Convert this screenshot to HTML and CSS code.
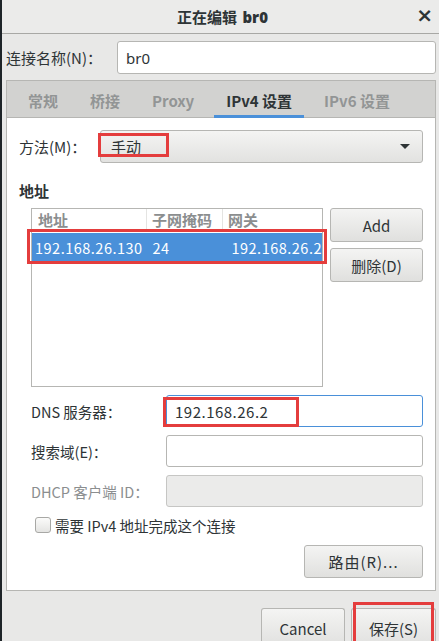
FILE: index.html
```html
<!DOCTYPE html>
<html lang="zh-CN">
<head>
<meta charset="utf-8">
<title>正在编辑 br0</title>
<link rel="stylesheet" href="styles.css">
</head>
<body>
<div class="window">
  <div class="titlebar">
    <span class="title">正在编辑 <b class="latin">br0</b></span>
    <span class="close">×</span>
  </div>
  <div class="content">
    <div class="name-row">
      <span class="label">连接名称(N)：</span>
      <div class="entry name-entry"><span class="latin">br0</span></div>
    </div>
    <div class="notebook">
      <div class="tabs">
        <span class="tab">常规</span>
        <span class="tab">桥接</span>
        <span class="tab">Proxy</span>
        <span class="tab active">IPv4 设置</span>
        <span class="tab">IPv6 设置</span>
      </div>
      <div class="page">
        <div class="method-row">
          <span class="label">方法(M)：</span>
          <div class="combo">
            <span class="combo-text">手动</span>
            <span class="arrow"></span>
            <span class="mark mark-method"></span>
          </div>
        </div>
        <div class="heading">地址</div>
        <div class="addr-block">
          <div class="tree">
            <div class="tree-head">
              <span class="col c1">地址</span>
              <span class="col c2">子网掩码</span>
              <span class="col c3">网关</span>
            </div>
            <div class="tree-row selected">
              <span class="col c1">192.168.26.130</span>
              <span class="col c2">24</span>
              <span class="col c3">192.168.26.2</span>
            </div>
            <span class="mark mark-row"></span>
          </div>
          <div class="side-buttons">
            <div class="button">Add</div>
            <div class="button">删除(D)</div>
          </div>
        </div>
        <div class="form">
          <span class="label">DNS 服务器：</span>
          <div class="entry focused"><span class="num">192.168.26.2</span><span class="mark mark-dns"></span></div>
          <span class="label">搜索域(E)：</span>
          <div class="entry"></div>
          <span class="label disabled">DHCP 客户端 ID：</span>
          <div class="entry insensitive"></div>
        </div>
        <div class="check-row">
          <span class="checkbox"></span>
          <span class="label">需要 IPv4 地址完成这个连接</span>
        </div>
        <div class="route-row">
          <div class="button route">路由(R)...</div>
        </div>
      </div>
    </div>
    <div class="actions">
      <div class="button action cancel">Cancel</div>
      <div class="button action save">保存(S)<span class="mark mark-save"></span></div>
    </div>
  </div>
</div>
</body>
</html>
```
FILE: styles.css
```css
html, body {
  margin: 0;
  padding: 0;
}
body {
  width: 439px;
  height: 641px;
  overflow: hidden;
  background: #1e2428;
  font-family: "Noto Sans CJK SC", "Noto Sans", sans-serif;
  font-size: 15px;
  color: #2e3436;
}
.window {
  margin-left: 2px;
  height: 641px;
  background: #e8e8e7;
  display: flex;
  flex-direction: column;
  overflow: hidden;
}
.window > * {
  flex-shrink: 0;
}
.titlebar {
  height: 33px;
  border-bottom: 1px solid #a8a8a5;
  background: #ebebea;
  position: relative;
  display: flex;
  align-items: center;
  justify-content: center;
}
.title {
  font-weight: bold;
  font-size: 15px;
  margin-left: 4px;
  color: #2e3436;
}
.title b {
  margin-left: 2px;
}
.close {
  position: absolute;
  right: 6px;
  top: 3px;
  font-size: 20px;
  font-weight: bold;
  font-family: "DejaVu Sans", sans-serif;
  color: #2e3436;
}
.content {
  padding: 0 3px 0 4px;
  display: flex;
  flex-direction: column;
}
.content > * {
  flex-shrink: 0;
}
.name-row {
  display: flex;
  align-items: center;
  margin-top: 7px;
  height: 33px;
}
.name-row .label {
  width: 111px;
}
.entry {
  height: 30px;
  box-sizing: border-box;
  background: #fff;
  border: 1px solid #b6b6b3;
  border-radius: 3px;
  display: flex;
  align-items: center;
  padding-left: 8px;
  position: relative;
}
.name-entry {
  flex: 1;
  height: 33px;
}
.notebook {
  margin-top: 6px;
  border: 1px solid #b6b6b3;
  background: #fff;
}
.tabs {
  height: 37px;
  box-sizing: border-box;
  background: #d2d2d0;
  border-bottom: 1px solid #b6b6b3;
  display: flex;
  padding-left: 5px;
}
.tab {
  margin: 0 4px;
  padding: 2px 12px 0;
  display: flex;
  align-items: center;
  font-weight: bold;
  color: #929595;
  box-sizing: border-box;
}
.tab.active {
  color: #2e3436;
  border-bottom: 3px solid #4a90d9;
  padding-top: 5px;
  margin-bottom: -1px;
}
.page {
  height: 472px;
  box-sizing: border-box;
  padding: 12px 12px 0 12px;
  display: flex;
  flex-direction: column;
}
.method-row {
  display: flex;
  align-items: center;
  height: 33px;
}
.method-row .label {
  width: 81px;
}
.combo {
  flex: 1;
  height: 33px;
  box-sizing: border-box;
  border: 1px solid #b6b6b3;
  border-radius: 3px;
  background: linear-gradient(#f4f4f3, #e2e2e0);
  display: flex;
  align-items: center;
  padding: 0 12px 0 10px;
  position: relative;
}
.combo-text {
  flex: 1;
}
.arrow {
  width: 0;
  height: 0;
  border-left: 5px solid transparent;
  border-right: 5px solid transparent;
  border-top: 5px solid #2e3436;
}
.mark {
  position: absolute;
  border: 3px solid #e43d3d;
  box-sizing: border-box;
  pointer-events: none;
}
.mark-method {
  left: -3px;
  top: 2px;
  width: 71px;
  height: 24px;
}
.heading {
  font-weight: bold;
  margin-top: 18px;
  height: 20px;
  line-height: 20px;
}
.addr-block {
  display: flex;
  margin-top: 7px;
  margin-left: 12px;
  gap: 7px;
}
.tree {
  width: 292px;
  height: 179px;
  box-sizing: border-box;
  border: 1px solid #b6b6b3;
  position: relative;
  background: #fff;
}
.tree-head {
  display: flex;
  height: 21px;
  align-items: center;
  color: #8b8e8f;
  font-weight: bold;
  border-bottom: 1px solid #e4e4e2;
}
.tree-head .col {
  border-left: 1px solid #e4e4e2;
  height: 21px;
  line-height: 21px;
  padding-left: 5px;
  box-sizing: border-box;
}
.tree-head .c1 {
  border-left: none;
  padding-left: 6px;
}
.col.c1 { width: 114px; }
.col.c2 { width: 76px; }
.col.c3 { flex: 1; }
.tree-row {
  display: flex;
  height: 28px;
  align-items: center;
  margin-top: 2px;
}
.tree-row.selected {
  background: #4a90d9;
  color: #fff;
}
.tree-row .col {
  padding-left: 3px;
  font-size: 14.5px;
  letter-spacing: 0.5px;
}
.tree-row .c2 { padding-left: 5px; }
.tree-row .c3 { padding-left: 4px; }
.mark-row {
  left: -5px;
  top: 20px;
  width: 300px;
  height: 35px;
}
.side-buttons {
  display: flex;
  flex-direction: column;
  gap: 6px;
  width: 93px;
}
.button {
  height: 34px;
  box-sizing: border-box;
  border: 1px solid #b6b6b3;
  border-radius: 3px;
  background: linear-gradient(#f4f4f3, #e0e0de);
  display: flex;
  align-items: center;
  justify-content: center;
  position: relative;
  color: #2e3436;
}
.form {
  display: grid;
  grid-template-columns: 135px 1fr;
  grid-auto-rows: 32px;
  row-gap: 8px;
  margin-top: 8px;
  margin-left: 12px;
  align-items: center;
}
.form .entry {
  height: 32px;
}
.form .label {
  font-size: 14.5px;
}
.label.disabled {
  color: #8b8e8f;
}
.entry.focused {
  border-color: #4a90d9;
}
.entry .num {
  letter-spacing: 0.5px;
}
.mark-dns {
  left: -4px;
  top: 1px;
  width: 136px;
  height: 30px;
}
.entry.insensitive {
  background: #ebebea;
  border-color: #c6c6c4;
}
.check-row {
  display: flex;
  align-items: center;
  margin-top: 10px;
  margin-left: 16px;
  height: 16px;
  gap: 4px;
}
.checkbox {
  width: 14px;
  height: 14px;
  border: 1px solid #a8a8a5;
  border-radius: 3px;
  background: linear-gradient(#fbfbfa, #e4e4e2);
}
.check-row .label {
  font-size: 14.5px;
}
.route-row {
  display: flex;
  justify-content: flex-end;
  margin-top: 12px;
}
.route {
  width: 119px;
  height: 33px;
  letter-spacing: 1px;
}
.actions {
  display: flex;
  justify-content: flex-end;
  gap: 6px;
  margin-top: 17px;
}
.action {
  height: 40px;
  border-bottom: none;
  border-radius: 3px 3px 0 0;
}
.cancel {
  width: 84px;
}
.save {
  width: 85px;
}
.mark-save {
  left: 1px;
  top: -7px;
  width: 81px;
  height: 48px;
}
.latin {
  font-family: "Noto Sans", sans-serif;
}
```
